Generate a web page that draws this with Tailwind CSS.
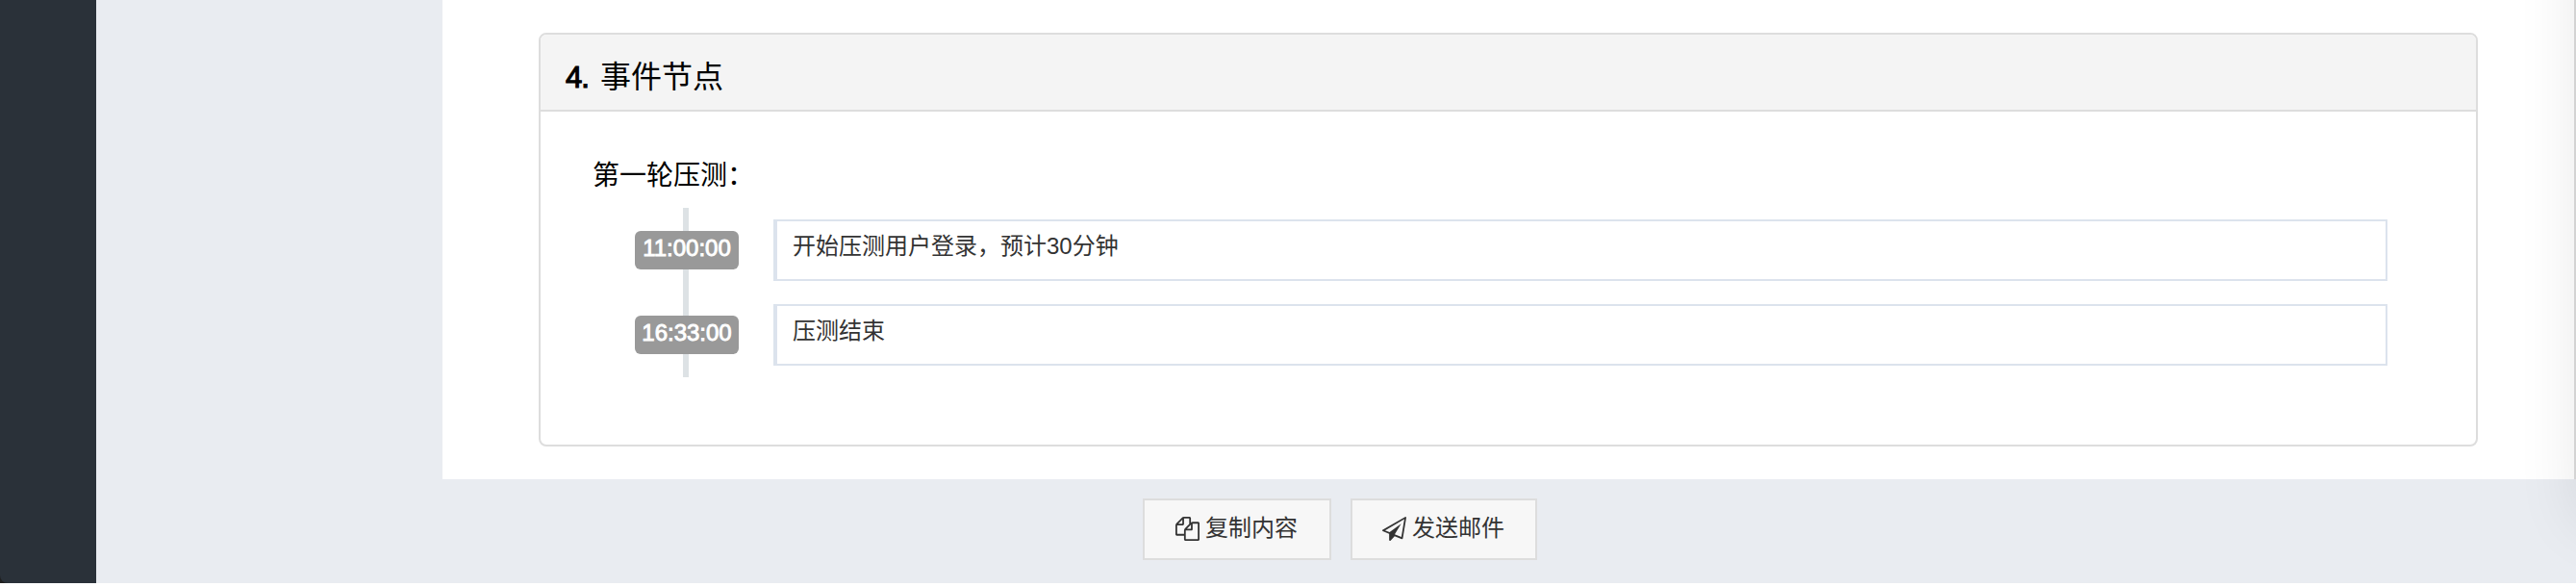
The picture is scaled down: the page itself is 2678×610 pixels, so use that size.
<!DOCTYPE html>
<html lang="zh-CN">
<head>
    <meta charset="UTF-8">
    <meta name="viewport" content="width=device-width, initial-scale=1.0">
    <title>事件节点</title>
    <script src="https://cdn.jsdelivr.net/npm/@tailwindcss/browser@4"></script>
</head>
<body class="bg-white font-['Liberation_Sans','Noto_Sans_CJK_SC',sans-serif] text-[#333]">
    <div class="relative flex h-[606px] w-full overflow-hidden bg-[#e9ecf1]">
        <!-- sidebar -->
        <aside class="w-[100px] shrink-0 bg-[#1f1f1f]">
            <div class="h-full rounded-bl-[8px] bg-[#2a3139]"></div>
        </aside>

        <main class="flex flex-1 flex-col pl-[360px]">
            <section class="h-[498px] border-r-2 border-[#ddd] bg-white pt-[34px] pr-[100px] pl-[100px]">
                <div class="h-[430px] overflow-hidden rounded-[8px] border-2 border-[#ddd]">
                    <div class="flex h-20 items-center gap-[11px] border-b-2 border-[#ddd] bg-[#f4f4f4] pt-[10px] pl-[26px] text-[32px] leading-none text-black">
                        <span class="w-[25px] text-[31px] tracking-[-1px] [-webkit-text-stroke:1.2px_black]">4.</span>
                        <h2>事件节点</h2>
                    </div>
                    <div class="pt-[49px] pr-[92px] pl-[54px]">
                        <h3 class="h-[51px] text-[28px] leading-[36px] text-black">第一轮压测：</h3>

                        <!-- timeline -->
                        <ul>
                            <li class="flex h-[88px]">
                                <div class="flex w-[188px] flex-col items-center pl-[8px]">
                                    <div class="mr-[2px] h-6 w-[6px] bg-[#dde2e5]"></div>
                                    <span class="h-10 w-[108px] rounded-[6px] bg-[#999] text-center text-[24px] leading-[35px] text-white [-webkit-text-stroke:0.9px_white]">11:00:00</span>
                                    <div class="mr-[2px] h-6 w-[6px] bg-[#dde2e5]"></div>
                                </div>
                                <p class="mt-3 h-16 flex-1 border-2 border-l-4 border-[#dce3ed] pl-4 text-[24px] leading-[51px]">开始压测用户登录，预计30分钟</p>
                            </li>
                            <li class="flex h-[88px]">
                                <div class="flex w-[188px] flex-col items-center pl-[8px]">
                                    <div class="mr-[2px] h-6 w-[6px] bg-[#dde2e5]"></div>
                                    <span class="h-10 w-[108px] rounded-[6px] bg-[#999] text-center text-[24px] leading-[35px] text-white [-webkit-text-stroke:0.9px_white]">16:33:00</span>
                                    <div class="mr-[2px] h-6 w-[6px] bg-[#dde2e5]"></div>
                                </div>
                                <p class="mt-3 h-16 flex-1 border-2 border-l-4 border-[#dce3ed] pl-4 text-[24px] leading-[51px]">压测结束</p>
                            </li>
                        </ul>
                    </div>
                </div>
            </section>

            <div class="flex gap-5 pt-5 pl-[728px]">
                <button class="flex h-16 w-[196px] items-start border-2 border-[#ddd] bg-[#f7f7f7] pl-8 text-[24px] leading-[58px]">
                    <svg class="mt-[17px] mr-[6px] h-[25px] w-[25px]" viewBox="0 0 1792 1792" fill="currentColor"><path d="M1696 384q40 0 68 28t28 68v1216q0 40-28 68t-68 28h-960q-40 0-68-28t-28-68v-288h-544q-40 0-68-28t-28-68v-672q0-40 20-88t48-76l408-408q28-28 76-48t88-20h416q40 0 68 28t28 68v328q68-40 128-40h416zm-544 213l-299 299h299v-299zm-640-384l-299 299h299v-299zm196 647l316-316v-416h-384v416q0 40-28 68t-68 28h-416v640h512v-256q0-40 20-88t48-76zm956 804v-1152h-384v416q0 40-28 68t-68 28h-416v640h896z"/></svg>
                    复制内容
                </button>
                <button class="flex h-16 w-[194px] items-start border-2 border-[#ddd] bg-[#f7f7f7] pl-[31px] text-[24px] leading-[58px]">
                    <svg class="mt-[17px] mr-[6px] h-[25px] w-[25px]" viewBox="0 0 1792 1792" fill="currentColor"><path d="M1764 11q33 24 27 64l-256 1536q-5 29-32 45-14 8-31 8-11 0-24-5l-527-215-298 327q-18 21-47 21-14 0-23-4-19-7-30-23.5t-11-36.5v-452l-472-193q-37-14-40-55-3-39 32-59l1664-960q35-21 68 2zm-342 1499l221-1323-1434 827 336 137 863-639-478 797z"/></svg>
                    发送邮件
                </button>
            </div>
        </main>

        <!-- shadow of the drawer parked off the right edge -->
        <div class="absolute -top-[200px] left-full h-[745px] w-[400px] shadow-[0_0_60px_rgba(0,0,0,0.09)]"></div>
    </div>
</body>
</html>
